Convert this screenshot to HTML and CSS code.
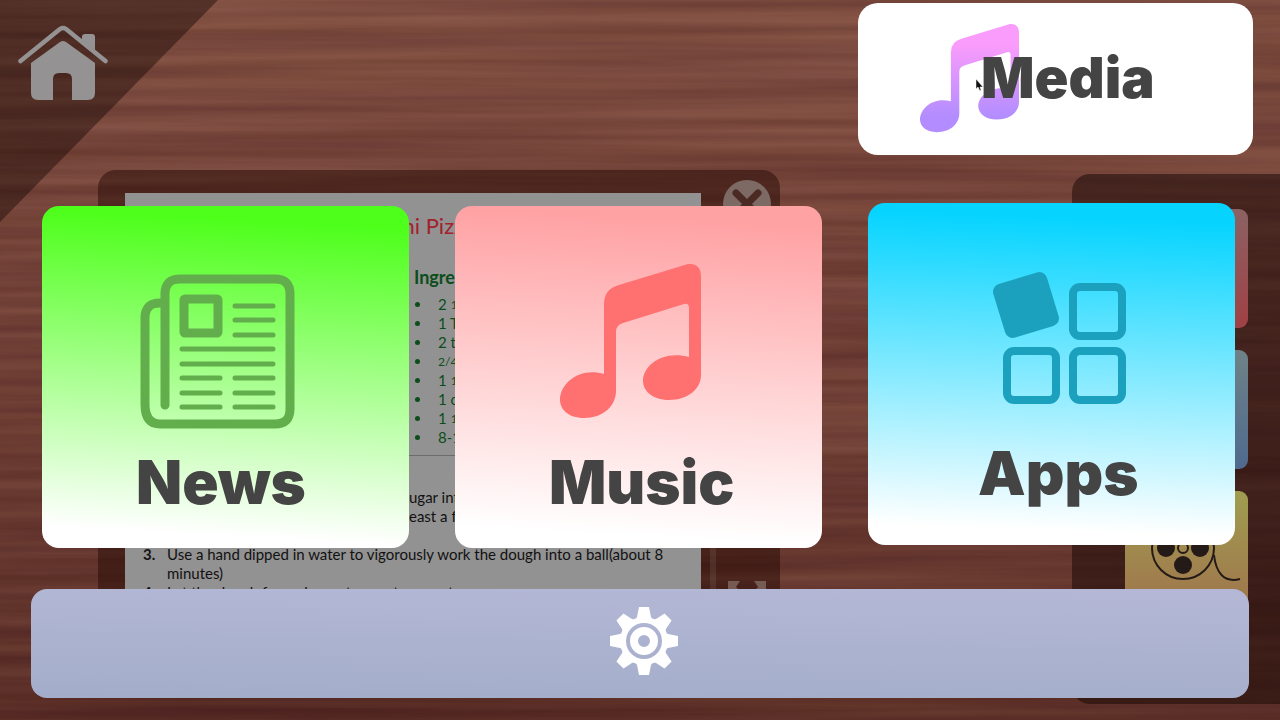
FILE: index.html
```html
<!DOCTYPE html>
<html lang="en">
<head>
<meta charset="utf-8">
<title>Home launcher</title>
<link rel="stylesheet" href="styles.css">
</head>
<body>
<div class="desktop">
  <svg class="wood" aria-hidden="true">
    <defs>
      <filter id="grain" x="0" y="0" width="100%" height="100%" color-interpolation-filters="sRGB">
        <feTurbulence type="fractalNoise" baseFrequency="0.0018 0.075" numOctaves="4" seed="11"/>
        <feColorMatrix values="0.24 0 0 0 0.33  0.21 0 0 0 0.16  0.16 0.05 0 0 0.12  0 0 0 0 1"/>
      </filter>
      <linearGradient id="shade" x1="0" y1="0" x2="0" y2="1">
        <stop offset="0" stop-color="#8c5a48" stop-opacity="0.35"/>
        <stop offset="0.4" stop-color="#703c34" stop-opacity="0.35"/>
        <stop offset="1" stop-color="#3c1410" stop-opacity="0.45"/>
      </linearGradient>
    </defs>
    <rect width="100%" height="100%" filter="url(#grain)"/>
    <rect width="100%" height="100%" fill="url(#shade)"/>
  </svg>

  <section class="window" aria-label="Recipe">
    <article class="page">
      <h2 class="page-title">Mini Pizza</h2>
      <h3 class="page-subtitle">Ingredients</h3>
      <ul class="ingredients">
        <li>2 <small>1</small></li>
        <li>1 T</li>
        <li>2 t</li>
        <li><small>2/4</small></li>
        <li>1 <small>1</small></li>
        <li>1 c</li>
        <li>1 <small>1</small></li>
        <li>8-1</li>
      </ul>
      <div class="steps">
        <p class="step-tail">ugar into<br>east a f</p>
        <ol class="step-list" start="3">
          <li>Use a hand dipped in water to vigorously work the dough into a ball(about 8 minutes)</li>
          <li>Let the dough for an hour at room temperature</li>
        </ol>
      </div>
    </article>
    <div class="scroll-track"></div>
    <div class="window-tools">
      <button class="close" aria-label="Close">
        <svg viewBox="0 0 48 48" width="48" height="48"><circle cx="24" cy="24" r="24" fill="#7d6a65"/><path d="M13 13L35 35M35 13L13 35" stroke="#4b2a23" stroke-width="7" stroke-linecap="round"/></svg>
      </button>
      <button class="resize" aria-label="Resize">
        <svg viewBox="0 0 40 40" width="40" height="40"><path d="M1 1H13L9 7 14 12 9 17 1 10ZM39 1H27L31 7 26 12 31 17 39 10Z" fill="#765a54"/></svg>
      </button>
    </div>
  </section>

  <aside class="dock" aria-label="Shortcuts">
    <div class="tile tile-red"></div>
    <div class="tile tile-blue"></div>
    <div class="tile tile-yellow">
      <svg viewBox="0 0 123 120" width="123" height="120" aria-hidden="true">
        <g fill="none" stroke="#241a17" stroke-width="2"><circle cx="58" cy="57" r="31"/><circle cx="58" cy="57" r="5"/><path d="M89 64C91 82 99 92 115 88"/></g>
        <g fill="#241a17"><circle cx="41" cy="57" r="9"/><circle cx="75" cy="57" r="9"/><circle cx="58" cy="40" r="9"/><circle cx="58" cy="74" r="9"/></g>
      </svg>
    </div>
  </aside>

  <a class="corner" href="#" aria-label="Home">
    <svg viewBox="0 0 90 76" width="90" height="76">
      <path d="M2.500 36L42 4Q45 2 48 4L87.500 36" fill="none" stroke="#949292" stroke-width="4.500" stroke-linecap="round" stroke-linejoin="round"/>
      <path d="M64 15V12Q64 9 67 9H74Q77 9 77 12V25Z" fill="#949292"/>
      <path d="M13 38L42 17Q45 15 48 17L77 38V68Q77 75 70 75H54V54Q54 48 48 48H41Q35 48 35 54V75H20Q13 75 13 68Z" fill="#949292"/>
    </svg>
  </a>

  <main class="launcher">
    <header class="top">
      <button class="media">
        <svg class="media-icon" viewBox="0 0 141 155" width="99" height="109" aria-hidden="true">
          <defs><linearGradient id="pinkViolet" x1="0" y1="0" x2="0" y2="1"><stop offset="0.2" stop-color="#f99cfb"/><stop offset="0.85" stop-color="#b38dff"/></linearGradient></defs>
          <path fill="url(#pinkViolet)" d="M128 0Q141-1 141 13V111C141 125 128 136 109 136C93 136 83 127 83 117C83 101 103 86 129 93V44Q129 39 124 40L63 59Q56 61 56 68V127C56 142 43 154 24 154C8 154 0 145 0 136C0 119 20 103 44 110V40Q44 25 59 21Z"/>
        </svg>
        <span class="media-label">Media</span>
      </button>
    </header>
    <nav class="cards" aria-label="Sections">
      <button class="card card-news">
        <svg class="card-icon" viewBox="0 0 155 155" width="155" height="155" aria-hidden="true">
          <g fill="none" stroke="#63ae4c" stroke-width="9" stroke-linecap="round">
            <path d="M25 131V20Q25 5 40 5H135Q150 5 150 20V135Q150 150 135 150H20Q5 150 5 130V44Q5 29 20 29"/>
            <rect x="44" y="25" width="34" height="34" rx="1"/>
          </g>
          <path d="M95 32H133M95 46H133M95 61H133M42 75H133M42 90H133M42 104H80M95 104H133M42 119H80M95 119H133M42 133H80M95 133H133" stroke="#63ae4c" stroke-width="5" stroke-linecap="round"/>
        </svg>
        <span class="card-label">News</span>
      </button>
      <button class="card card-music">
        <svg class="card-icon" viewBox="0 0 141 155" width="155" height="155" aria-hidden="true">
          <path fill="#ff7071" d="M128 0Q141-1 141 13V111C141 125 128 136 109 136C93 136 83 127 83 117C83 101 103 86 129 93V44Q129 39 124 40L63 59Q56 61 56 68V127C56 142 43 154 24 154C8 154 0 145 0 136C0 119 20 103 44 110V40Q44 25 59 21Z"/>
        </svg>
        <span class="card-label">Music</span>
      </button>
      <button class="card card-apps">
        <svg class="card-icon" viewBox="0 0 135 155" width="155" height="155" aria-hidden="true">
          <rect x="6" y="6" width="56" height="56" rx="8" fill="#1ba0be" transform="rotate(-17 34 34)"/>
          <g fill="none" stroke="#1ba0be" stroke-width="8"><rect x="81" y="16" width="49" height="49" rx="7"/><rect x="15" y="80" width="49" height="49" rx="7"/><rect x="81" y="80" width="49" height="49" rx="7"/></g>
        </svg>
        <span class="card-label">Apps</span>
      </button>
    </nav>
    <footer class="bar">
      <button class="settings" aria-label="Settings">
        <svg viewBox="-34 -34 68 68" width="68" height="68">
          <defs><path id="tooth" d="M-9-20L-7-24-5-34H5L7-24 9-20Z"/></defs>
          <g fill="#fff">
            <path fill-rule="evenodd" d="M0-24A24 24 0 1 1 0 24A24 24 0 1 1 0-24ZM0-18A18 18 0 1 0 0 18A18 18 0 1 0 0-18Z"/>
            <path fill-rule="evenodd" d="M0-14A14 14 0 1 1 0 14A14 14 0 1 1 0-14ZM0-6A6 6 0 1 0 0 6A6 6 0 1 0 0-6Z"/>
            <use href="#tooth"/><use href="#tooth" transform="rotate(45)"/><use href="#tooth" transform="rotate(90)"/><use href="#tooth" transform="rotate(135)"/><use href="#tooth" transform="rotate(180)"/><use href="#tooth" transform="rotate(225)"/><use href="#tooth" transform="rotate(270)"/><use href="#tooth" transform="rotate(315)"/>
          </g>
        </svg>
      </button>
    </footer>
  </main>
  <svg class="pointer" viewBox="0 0 8 13" width="8" height="13" aria-hidden="true"><path d="M1 0V10L3 8 5 12 6 11 5 8H8Z" fill="#111" stroke="#fff" stroke-width="0.500"/></svg>
</div>
</body>
</html>
```
FILE: styles.css
```css
* { box-sizing: border-box; }

body {
  margin: 0;
  font-family: Lato, sans-serif;
}

button {
  border: 0;
  padding: 0;
  background: none;
  font: inherit;
  color: inherit;
  cursor: pointer;
}

svg { display: block; }

.desktop {
  position: relative;
  min-height: 100vh;
  overflow: hidden;
  background: #6c3f36;
}

.wood {
  position: absolute;
  inset: 0;
  width: 100%;
  height: 100%;
}

/* Recipe window on the desktop */
.window {
  position: absolute;
  left: 98px;
  top: 170px;
  width: 682px;
  height: 500px;
  padding: 23px 9px 23px 27px;
  display: flex;
  border-radius: 18px;
  background: rgba(38, 10, 4, 0.5);
}

.page {
  flex: 1;
  overflow: hidden;
  background: #939292;
  padding: 20px 16px 0;
}

.page-title {
  margin: 0;
  padding-left: 236px;
  font-size: 22px;
  line-height: 26px;
  font-weight: 400;
  color: #a3202c;
}

.page-subtitle {
  margin: 26px 0 0;
  padding-left: 273px;
  font-size: 18px;
  line-height: 24px;
  font-weight: 700;
  color: #0b4d1b;
}

.ingredients {
  margin: 6px 0 8px;
  padding-left: 297px;
  list-style: none;
  font-size: 15px;
  line-height: 19px;
  color: #0b4d1b;
}

.ingredients li {
  display: flex;
  gap: 4px;
  height: 19px;
}

.ingredients li::before {
  content: "";
  flex: none;
  width: 5px;
  height: 5px;
  margin: 7px 14px 0 -23px;
  border-radius: 50%;
  background: currentColor;
}

.ingredients small { font-size: 12px; }

.steps {
  margin: 0 -16px;
  padding: 32px 16px 0;
  border-top: 1px solid #6d6c6c;
  font-size: 15px;
  line-height: 19px;
  color: #111;
}

.step-tail {
  margin: 0 0 19px;
  padding-left: 268px;
}

.step-list {
  margin: 0;
  padding-left: 26px;
  list-style: none;
  counter-reset: step 2;
}

.step-list li::before {
  counter-increment: step;
  content: counter(step) ".";
  display: inline-block;
  width: 24px;
  margin-left: -24px;
  font-weight: 700;
}

.scroll-track {
  width: 6px;
  margin: 24px 7px 0 9px;
  background: rgba(255, 255, 255, 0.08);
}

.window-tools {
  display: flex;
  flex-direction: column;
  align-items: center;
  gap: 352px;
  margin-top: -13px;
}

/* Shortcut dock at the right edge */
.dock {
  position: absolute;
  left: 1072px;
  right: 0;
  top: 174px;
  height: 530px;
  padding: 35px 32px 0 53px;
  display: flex;
  flex-direction: column;
  gap: 22px;
  border-radius: 18px 0 0 18px;
  background: rgba(22, 6, 3, 0.5);
}

.tile {
  height: 119px;
  border-radius: 9px;
}

.tile-red { background: linear-gradient(#8b6264, #a04044); }
.tile-blue { background: linear-gradient(#6e8286, #4f6a8f); }
.tile-yellow { background: linear-gradient(#9f9d50, #a0744c); }

.corner {
  position: absolute;
  left: 0;
  top: 0;
  width: 218px;
  height: 222px;
  padding: 25px 0 0 18px;
  clip-path: polygon(0 0, 100% 0, 0 100%);
  background: rgba(20, 5, 2, 0.42);
}

/* Foreground launcher */
.launcher {
  position: relative;
  min-height: 100vh;
  padding: 3px 27px 22px 31px;
  display: flex;
  flex-direction: column;
}

.top {
  display: flex;
  justify-content: flex-end;
}

.media {
  width: 395px;
  height: 152px;
  padding: 0 0 2px 62px;
  display: flex;
  align-items: center;
  border-radius: 20px;
  background: #fff;
}

.media-label {
  margin-left: -38px;
  font: 900 56px/64px Inter, sans-serif;
  color: #444;
  z-index: 1;
}

.cards {
  display: grid;
  grid-template-columns: repeat(3, 1fr);
  gap: 46px;
  margin-top: 48px;
  padding: 0 18px 0 11px;
  height: 345px;
}

.card {
  height: 342px;
  align-self: end;
  padding: 68px 0 0 98px;
  display: flex;
  flex-direction: column;
  align-items: flex-start;
  gap: 17px;
  border-radius: 17px;
}

.card-news {
  background: linear-gradient(183deg, #4dff1a 6%, #fff 94%);
}

.card-music {
  padding-top: 58px;
  gap: 27px;
  background: linear-gradient(183deg, #ffa2a4 6%, #fff 94%);
}

.card-apps {
  align-self: start;
  padding-left: 114px;
  gap: 11px;
  background: linear-gradient(182deg, #06d4ff 6%, #fff 94%);
}

.card-label {
  margin-left: -4px;
  font: 900 60px/72px Inter, sans-serif;
  color: #444;
}

.bar {
  margin: 41px 4px 0 0;
  height: 109px;
  padding: 0 0 6px 8px;
  display: flex;
  align-items: center;
  justify-content: center;
  border-radius: 16px;
  background: linear-gradient(181deg, #b4b8d6, #a3adc9);
}

.pointer {
  position: absolute;
  left: 975px;
  top: 79px;
}
```
